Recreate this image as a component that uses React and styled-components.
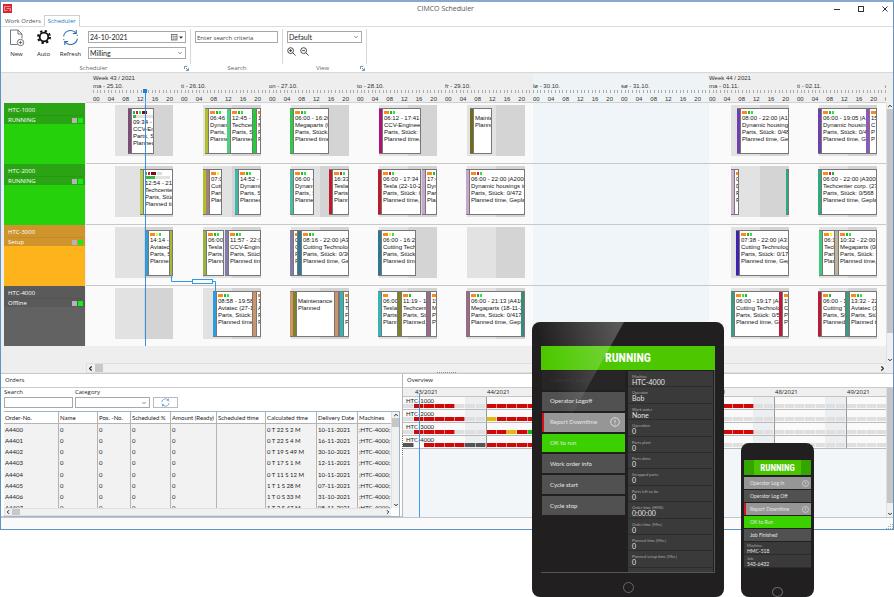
import React from "react";
import styled, { createGlobalStyle, css } from "styled-components";
import { ChevronDown, ChevronUp, ChevronLeft, ChevronRight } from "lucide-react";

const DAY = 88;
const LEAD = 7;
const UI = `"Open Sans", "Noto Sans", sans-serif`;
const SMALL = `Lato, "Open Sans", sans-serif`;
const PLAIN = `"Liberation Sans", sans-serif`;
const HEAVY = `"Roboto Condensed", "Open Sans Condensed", Roboto, sans-serif`;

const C = {
  o: "#f98a1c",
  g: "#22b832",
  l: "#2ce83c",
  r: "#d3203a",
  d: "#7a0a18",
  y: "#f4ee3c",
  w: "#dcdcdc",
};

/* ---------- data ---------- */

const hours = ["00", "04", "08", "12", "16", "20"];
const days = [
  { name: "ma - 25.10.", week: "Week 43 / 2021", hours },
  { name: "ti - 26.10.", hours },
  { name: "on - 27.10.", hours },
  { name: "to - 28.10.", hours },
  { name: "fr - 29.10.", hours },
  { name: "lø - 30.10.", off: true, hours },
  { name: "sø - 31.10.", off: true, hours },
  { name: "ma - 01.11.", week: "Week 44 / 2021", hours },
  { name: "ti - 02.11.", hours },
  { name: "on", hours: ["00"] },
];

const P = "Parts, Stück: ";
const T = "Planned time, Geplant";

// x and w are canvas units, text is one entry per line
const machines = [
  {
    name: "HTC-1000",
    state: "RUNNING",
    head: "#2aa315",
    body: "#25d10b",
    jobs: [
      { x: 42, w: 26, color: "#7c4c7a", chips: "grld", progress: 3, text: ["09:34 - 17:20", "CCV-Engineering", P, T] },
      { x: 119, w: 23, color: "#b1be2e", chips: "ogl", text: ["06:46", "Dynamic", P, T] },
      { x: 141, w: 26, color: "#52cf7e", chips: "ogl", text: ["12:45 - 19:30", "Techcenter", P, T] },
      { x: 167, w: 8, color: "#1fcf3a", chips: "o", text: ["1", "M", "P", "P"] },
      { x: 204, w: 39, color: "#2fc848", chips: "ogl", text: ["06:00 - 16:26", "Megaparts (08", P, T] },
      { x: 293, w: 42, color: "#ad1279", chips: "ogl", text: ["06:12 - 17:41 |A", "CCV-Engineering", P + "0", T] },
      { x: 384, w: 22, color: "#6f6c1f", chips: "", text: ["Maintenance", "Planned"] },
      { x: 651, w: 52, color: "#6d40ad", chips: "ogl", text: ["08:00 - 22:00 |A12", "Dynamic housings", P + "0/48", T] },
      { x: 732, w: 49, color: "#6d40ad", chips: "ogl", text: ["06:00 - 19:05 |A1", "Dynamic housing", P + "0/48", T] },
      { x: 780, w: 11, color: "#8f55c2", chips: "o", text: ["15", "C", "P", "P"] },
    ],
  },
  {
    name: "HTC-2000",
    state: "RUNNING",
    head: "#2aa315",
    body: "#25d10b",
    jobs: [
      { x: 54, w: 33, color: "#bccc48", chips: "grdw", progress: 10, text: ["12:54 - 21:55", "Techcenter", P, T] },
      { x: 117, w: 4, color: "#b1be2e", text: [] },
      { x: 120, w: 16, color: "#a38177", chips: "oy", text: ["07:05", "Cutting", P, T] },
      { x: 149, w: 26, color: "#3fb8a5", chips: "ogl", text: ["14:52 - 22:00", "Dynamic", P, T] },
      { x: 204, w: 24, color: "#4eb9a2", chips: "ogl", text: ["06:00 - 11", "Dynamic", P, T] },
      { x: 243, w: 20, color: "#bf1a2b", chips: "orl", text: ["16:33", "Tesla", P, T] },
      { x: 292, w: 43, color: "#bf1a2b", chips: "orl", text: ["06:00 - 17:34 |A", "Tesla (22-10-2021", P + "0/3", T] },
      { x: 336, w: 15, color: "#c6a6cd", chips: "ogr", text: ["17:41", "Dynamic", P, T] },
      { x: 380, w: 59, color: "#c6a6cd", chips: "orl", text: ["06:00 - 22:00 |A2008", "Dynamic housings inc", P + "0/472", T] },
      { x: 645, w: 8, color: "#cdb4cf", chips: "o", text: ["0", "D", "P", "P"] },
      { x: 700, w: 3, color: "#2fa97e", text: [] },
      { x: 732, w: 59, color: "#2fa97e", chips: "org", text: ["06:00 - 22:00 |A3005", "Techcenter corp. (27-", P + "0/568", T] },
    ],
  },
  {
    name: "HTC-3000",
    state: "Setup",
    head: "#cf952c",
    body: "#fdb31b",
    jobs: [
      { x: 59, w: 25, color: "#2f9fd8", chips: "oyl", text: ["14:14 - 21:10", "Aviatec", P, T] },
      { x: 84, w: 3, color: "#a9b92f", text: [] },
      { x: 117, w: 21, color: "#98b43c", chips: "ogl", text: ["06:00", "Tesla (22", P, T] },
      { x: 139, w: 36, color: "#837cab", chips: "ogl", text: ["11:57 - 22:00", "CCV-Engineering", P, T] },
      { x: 204, w: 8, color: "#837cab", chips: "o", text: ["0", "C", "P", "P"] },
      { x: 212, w: 51, color: "#2b7894", chips: "ogl", text: ["08:16 - 22:00 |A30", "Cutting Technology", P + "0/36", T] },
      { x: 292, w: 38, color: "#2b7894", chips: "oyl", text: ["06:00 - 16:21", "Cutting Technology", P, T] },
      { x: 650, w: 53, color: "#3d22b3", chips: "ogl", text: ["07:38 - 22:00 |A310", "Cutting Technologies", P + "0/176", T] },
      { x: 733, w: 16, color: "#3ec97b", chips: "oy", text: ["06:11", "Techcenter", P, T] },
      { x: 749, w: 42, color: "#bdb49b", chips: "ogl", text: ["10:32 - 22:00 |A", "Megaparts (08-11", P + "0", T] },
    ],
  },
  {
    name: "HTC-4000",
    state: "Offline",
    head: "#5a5a5a",
    body: "#626262",
    jobs: [
      { x: 127, w: 40, color: "#2f9be2", chips: "ogl", text: ["08:58 - 19:58 |A", "Aviatec (27-10", P + "0", T] },
      { x: 167, w: 8, color: "#cd936c", chips: "o", text: ["1", "A", "P", "P"] },
      { x: 204, w: 4, color: "#cd936c", text: [] },
      { x: 207, w: 42, color: "#7e8124", chips: "", text: ["Maintenance", "Planned"] },
      { x: 249, w: 5, color: "#cd936c", text: [] },
      { x: 254, w: 9, color: "#33b6b5", chips: "o", text: ["1", "T", "P", "P"] },
      { x: 292, w: 20, color: "#33b6b5", chips: "o", text: ["06:00", "Tesla", P, T] },
      { x: 312, w: 29, color: "#7e8124", chips: "og", text: ["11:19 - 15:50", "Techcenter", P, T] },
      { x: 341, w: 10, color: "#9a6a8b", chips: "o", text: ["15", "M", "P", "P"] },
      { x: 380, w: 56, color: "#9a6a8b", chips: "ogl", text: ["06:00 - 21:13 |A4106", "Megaparts (18-11-20", P + "0/417", T] },
      { x: 435, w: 4, color: "#3b8a7a", text: [] },
      { x: 645, w: 49, color: "#3c9a82", chips: "olg", text: ["06:00 - 19:17 |A4", "Cutting Technology", P + "0/50", T] },
      { x: 693, w: 10, color: "#bd1a38", chips: "o", text: ["15", "C", "P", "P"] },
      { x: 732, w: 28, color: "#bd1a38", chips: "og", text: ["06:00 - 13:30", "Cutting Tech", P, T] },
      { x: 760, w: 31, color: "#3c9a82", chips: "ogl", text: ["13:32 - 22:00", "Aviatec (12-11", P, T] },
    ],
  },
];

const columns = [
  ["Order-No.", 55],
  ["Name", 39],
  ["Pos. -No.", 33],
  ["Scheduled %", 40],
  ["Amount (Ready)", 46],
  ["Scheduled time", 49],
  ["Calculated time", 51],
  ["Delivery Date", 41],
  ["Machines", 33],
];

const orders = [
  ["A4400", "0 T 22 S 2 M", "10-11-2021"],
  ["A4401", "0 T 22 S 4 M", "16-11-2021"],
  ["A4402", "0 T 19 S 49 M", "30-10-2021"],
  ["A4403", "0 T 17 S 1 M", "12-11-2021"],
  ["A4404", "0 T 11 S 12 M", "10-11-2021"],
  ["A4405", "1 T 1 S 28 M", "07-11-2021"],
  ["A4406", "1 T 0 S 33 M", "31-10-2021"],
  ["A4407", "1 T 2 S 47 M", "08-11-2021"],
];

// one letter per day: r busy, y setup, g running, k offline, n now, - free
const overview = [
  ["HTC-1000", "-", "rrrr---", "rrrrr--", "rrrrr--", "rrrrr--", "rrrrr--", "-------", "-------"],
  ["HTC-2000", "-", "rrrrr--", "yrrrr--", "rrrrr--", "rrrrr--", "-------", "-------", "-------"],
  ["HTC-3000", "-", "rrrr---", "rryrg--", "rrrrr--", "rrrrr--", "rrrrr--", "-------", "-------"],
  ["HTC-4000", "k", "nrrrrkk", "rrrrr--", "rrrrr--", "rrrrr--", "-------", "-------", "-------"],
];
const weeks = ["43/2021", "44/2021", "45/2021", "46/2021", "47/2021", "48/2021", "49/2021"];
const cellColor = {
  r: "#d00808",
  y: "#e2b90c",
  g: "#17b81a",
  k: "#555555",
  n: "#ffffff",
  "-": "#dfdfdf",
};

const tabletInfo = [
  ["Machine", "HTC-4000"],
  ["Operator", "Bob"],
  ["Work order", "None"],
  ["Operation", "0"],
  ["Parts plant", "0"],
  ["Parts done", "0"],
  ["Scrapped parts", "0"],
  ["Parts left to do", "0"],
  ["Order time (HMS)", "0:00:00"],
  ["Order time (Min.)", "0"],
  ["Planned time (Min.)", "0"],
  ["Planned setup time (Min.)", "0"],
  ["Setup time left (Min.)", ""],
];

/* ---------- icons ---------- */

const LogoIcon = () => (
  <svg width="9" height="9" viewBox="0 0 9 9">
    <rect width="9" height="9" fill="#d9252f" />
    <path d="M7.500 2.500H1.500v4h3M3.500 4.500h4v2H6" fill="none" stroke="#f3b0b3" strokeWidth="0.8" />
  </svg>
);

const NewIcon = () => (
  <svg width="16" height="18" viewBox="0 0 16 18" fill="none" stroke="#555" strokeWidth="0.8">
    <path d="M8.500 15.500H1.500V1H9l4 4v4.500" />
    <path d="M9 1v4h4" />
    <circle cx="11.500" cy="13.500" r="3.200" fill="#fff" />
    <path d="M11.500 11.800v3.400M9.800 13.500h3.400" />
  </svg>
);

const GearIcon = () => (
  <svg width="16" height="16" viewBox="0 0 16 16" fill="none" stroke="#111">
    <circle cx="8" cy="8" r="4.300" strokeWidth="1.800" />
    <circle cx="8" cy="8" r="6" strokeWidth="2" strokeDasharray="2.300 2.412" />
  </svg>
);

const RefreshIcon = ({ size }) => (
  <svg width={size} height={size} viewBox="0 0 16 16" fill="none" stroke="#2f6fae" strokeWidth="1">
    <path d="M1.500 7A6.600 6.600 0 0 1 13 3.700M14.500 9A6.600 6.600 0 0 1 3 12.300" />
    <path d="M1.500 9.500a6.600 6.600 0 0 0 1 2.200M14.500 6.500a6.600 6.600 0 0 0-.8-2" strokeDasharray="1 1" />
    <path d="M13.400 1v3.200h-3.200M2.600 15v-3.200h3.200" />
  </svg>
);

const LensIcon = ({ minus }) => (
  <svg width="9" height="9" viewBox="0 0 9 9" fill="none" stroke="#333" strokeWidth="0.9">
    <circle cx="3.600" cy="3.600" r="2.900" />
    <path d="M5.800 5.800l2.700 2.700M2.200 3.600h2.800" />
    {!minus && <path d="M3.600 2.200v2.800" />}
  </svg>
);

const LauncherIcon = () => (
  <svg width="5" height="5" viewBox="0 0 5 5" fill="none" stroke="#4a78b0" strokeWidth="0.8">
    <path d="M.5 3V.5H3M2 2l2.200 2.200M4.500 2.200v2.300H2.200" />
  </svg>
);

const CalendarIcon = () => (
  <svg width="12" height="7" viewBox="0 0 12 7">
    <rect x="0.500" y="0.500" width="5.500" height="5.500" fill="#ddd" stroke="#666" strokeWidth="0.800" />
    <path d="M.5 2.500H6M2.500 2.500V6M4.200 2.500V6" stroke="#888" strokeWidth="0.500" />
    <path d="M8 2.500h4L10 4.700z" fill="#333" />
  </svg>
);

const AlertIcon = ({ size }) => (
  <svg width={size} height={size} viewBox="0 0 10 10" fill="none" stroke="#e4e4e4" strokeWidth="0.900">
    <circle cx="5" cy="5" r="4.300" />
    <path d="M5 2.600v3M5 6.600v.9" />
  </svg>
);

/* ---------- styles ---------- */

const GlobalStyle = createGlobalStyle`
  *, *::before, *::after { box-sizing: border-box; }
  body {
    margin: 0;
    background: #fff;
    color: #222;
    font-family: ${UI};
    font-size: 6px;
    line-height: 8px;
    overflow: hidden;
  }
  button, input, select { font: inherit; color: inherit; margin: 0; }
  button { background: none; border: 0; padding: 0; }
  svg { display: block; flex: none; }
`;

const Page = styled.div`
  position: relative;
  min-height: 597px;
`;

const Window = styled.main`
  display: flex;
  flex-direction: column;
  border: 1px solid #5f93c4;
  border-top: 2px solid #86a9cd;
  background: #fff;
`;

const TitleBar = styled.header`
  display: grid;
  grid-template-columns: 1fr auto 1fr;
  align-items: center;
  height: 13px;
  padding: 0 5px 0 2px;
`;

const Title = styled.h1`
  margin: 0;
  font-size: 7px;
  font-weight: 400;
  color: #555;
`;

const WindowButtons = styled.div`
  display: flex;
  justify-content: flex-end;
  gap: 18px;
`;

const Tabs = styled.nav`
  display: flex;
  align-items: flex-end;
  height: 12px;
  padding-left: 1px;
  border-bottom: 1px solid #dcdcdc;
`;

const Tab = styled.button`
  height: 12px;
  padding: 0 3px;
  margin-bottom: -1px;
  color: ${({ $active }) => ($active ? "#1c78c8" : "#555")};
  ${({ $active }) =>
    $active &&
    css`
      border: 1px solid #cfcfcf;
      border-bottom-color: #fff;
      background: #fff;
    `}
`;

const Ribbon = styled.section`
  display: flex;
  height: 46px;
  padding-top: 2px;
  border-bottom: 1px solid #d8d8d8;
`;

const Group = styled.div`
  display: flex;
  flex-direction: column;
  justify-content: space-between;
  width: ${({ $w }) => $w}px;
  padding-left: 2px;
  background: linear-gradient(#d8d8d8, #d8d8d8) right top / 1px 35px no-repeat;
`;

const GroupBody = styled.div`
  display: flex;
  height: 32px;
`;

const GroupName = styled.div`
  display: grid;
  grid-template-columns: 1fr auto;
  align-items: center;
  text-align: center;
  color: #666;
  padding-right: 2px;
`;

const Tools = styled.div`
  display: flex;
  padding-right: 2px;
`;

const Tool = styled.button`
  display: flex;
  flex-direction: column;
  align-items: center;
  justify-content: space-between;
  width: 27px;
  height: 29px;
`;

const Fields = styled.div`
  display: flex;
  flex-direction: column;
  gap: 4px;
  padding: 2px 0 0 2px;
`;

const Box = styled.div`
  display: grid;
  grid-template-columns: 1fr auto;
  align-items: center;
  width: ${({ $w }) => $w}px;
  height: ${({ $h = 12 }) => $h}px;
  border: 1px solid #a8a8a8;
  background: #fff;
  padding-right: 2px;
  font-family: ${SMALL};
  font-size: 7px;

  input,
  select {
    grid-area: 1 / 1 / 2 / 3;
    width: 100%;
    height: 100%;
    padding: 0 0 0 1px;
    border: 0;
    background: none;
    appearance: none;
    outline: none;
  }
  input::placeholder {
    color: #444;
    font-family: ${UI};
    font-size: 6px;
  }
  svg {
    grid-area: 1 / 2 / 2 / 3;
    pointer-events: none;
  }
`;

const Lenses = styled.div`
  display: flex;
  gap: 4px;
`;

const Planner = styled.section`
  display: grid;
  grid-template-columns: 85px 1fr 7px;
  background: #eee;
`;

const Ruler = styled.div`
  position: relative;
  display: flex;
  height: 30px;
  padding: 1px 0 0 ${LEAD}px;
  overflow: hidden;
  border-bottom: 1px solid #cfcfcf;
  font-family: ${PLAIN};
  color: #333;
`;

const RulerDay = styled.div`
  flex: 0 0 ${DAY}px;
  display: grid;
  grid-template-rows: 8px 8px 5px 7px;
  white-space: nowrap;
  background: ${({ $off }) => ($off ? "#eef3f6" : "none")};
`;

const Ticks = styled.div`
  height: 3px;
  background: repeating-linear-gradient(90deg, #aaa 0 1px, transparent 1px calc(100% / 24));
`;

const Hours = styled.div`
  display: grid;
  grid-template-columns: repeat(6, 1fr);
`;

const Marker = styled.div`
  position: absolute;
  top: 16px;
  bottom: 0;
  left: 57px;
  width: 4px;
  background: linear-gradient(#1f7fd8, #1f7fd8) center top / 4px 4px no-repeat,
    linear-gradient(#3a90e0, #3a90e0) 2px 0 / 1px 100% no-repeat;
`;

const Machine = styled.div`
  height: ${({ $last }) => ($last ? 60 : 61)}px;
  margin: 0 1px 0 3px;
  background: ${({ $color }) => $color};
  color: #fff;
`;

const MachineHead = styled.div`
  height: 21px;
  padding: 3px 2px 0 4px;
  background: ${({ $color }) => $color};
`;

const MachineState = styled.div`
  display: flex;
  align-items: center;
  gap: 1px;
  margin-top: 1px;
  border-top: 1px solid #0001;

  span {
    flex: 1;
  }
`;

const Lamp = styled.i`
  width: 5px;
  height: 5px;
  background: ${({ $on }) => ($on ? "#12f012" : "#b4b4b4")};
`;

const Canvas = styled.div`
  position: relative;
  overflow: hidden;
`;

const Track = styled.div`
  position: relative;
  display: flex;
  height: ${({ $last }) => ($last ? 60 : 61)}px;
  padding-left: ${LEAD}px;
  background: #fafafa;
  border-bottom: ${({ $last }) => ($last ? 0 : 1)}px solid #c8c8c8;
`;

const TrackDay = styled.div`
  flex: 0 0 ${DAY}px;
  display: flex;
  padding: 2px 8px 0 22px;
  background: ${({ $off }) => ($off ? "#f0f5f9" : "none")};
`;

const Shift = styled.div`
  flex: 1;
  height: 51px;
  background: ${({ $late }) => ($late ? "#d4d4d4" : "#e2e2e2")};
`;

const Job = styled.article`
  position: absolute;
  top: 5px;
  height: 46px;
  overflow: hidden;
  padding: ${({ $strip }) => ($strip ? "0" : "2px 0 0 5px")};
  border: 1px solid #777;
  border-left: 0;
  background: linear-gradient(90deg, ${({ $color }) => $color} 3px, #777 3px 4px, #fff 4px);
  font-family: ${PLAIN};
  line-height: 7px;
  color: #111;
  white-space: nowrap;
`;

const Chips = styled.div`
  display: flex;
  gap: 1px;
  height: 3px;
  margin-bottom: 1px;
`;

const Chip = styled.i`
  flex: 0 0 ${({ $kind }) => ("odw".includes($kind) ? 5 : 2)}px;
  background: ${({ $kind }) => C[$kind]};
`;

const Progress = styled.div`
  width: 25px;
  height: 3px;
  margin: 1px 0;
  background: linear-gradient(90deg, #35b845 ${({ $done }) => $done}px, #e2e2e2 0);
`;

const Overlay = styled.svg`
  position: absolute;
  inset: 0;
  width: 100%;
  height: 100%;
`;

const VBar = styled.div`
  display: flex;
  flex-direction: column;
  justify-content: space-between;
  align-items: center;
  background: #f0f0f0;
  border-left: 1px solid #e0e0e0;
`;

const Thumb = styled.div`
  flex: 0 1 ${({ $size }) => $size}px;
  align-self: stretch;
  margin-bottom: auto;
  background: #c6c6c6;
`;

const HBar = styled.div`
  display: flex;
  align-items: center;
  height: ${({ $h }) => $h}px;
  background: #f0f0f0;
  border: 1px solid #e0e0e0;
  border-right: 0;

  i {
    width: 8px;
    height: 100%;
    margin: 0 auto 0 1px;
    background: #c8c8c8;
  }
`;

const Gap = styled.div`
  height: 17px;
`;

const Lower = styled.section`
  position: relative;
  display: grid;
  grid-template-columns: 402px 1fr;
  height: 145px;
  border-top: 1px solid #c8c8c8;
  border-bottom: 2px solid #c4c4cc;
`;

const Grip = styled.div`
  position: absolute;
  ${({ $vertical }) =>
    $vertical
      ? css`
          top: 62px;
          left: 401px;
          width: 1px;
          height: 20px;
          background: repeating-linear-gradient(#666 0 1px, #fff 1px 2px);
        `
      : css`
          top: -2px;
          left: calc(50% - 10px);
          width: 20px;
          height: 1px;
          background: repeating-linear-gradient(90deg, #888 0 1px, #eee 1px 2px);
        `}
`;

const Panel = styled.div`
  display: flex;
  flex-direction: column;
  min-width: 0;
  border-right: ${({ $line }) => ($line ? 1 : 0)}px solid #b8b8b8;
`;

const PanelTitle = styled.h2`
  margin: 0;
  padding: 1px 4px;
  height: 14px;
  font-size: 6px;
  font-weight: 400;
  line-height: 10px;
  border-bottom: 1px solid #ccc;
`;

const Filters = styled.form`
  display: flex;
  align-items: flex-end;
  gap: 2px;
  height: 20px;
  padding-left: 3px;
`;

const Field = styled.label`
  display: grid;
  line-height: 9px;
`;

const RefreshButton = styled.button`
  display: grid;
  place-items: center;
  width: 25px;
  height: 11px;
  margin-left: 1px;
  border: 1px solid #bbb;
`;

const Grid = styled.div`
  display: grid;
  grid-template-columns: 387px 8px;
  margin: 3px 0 0 3px;
  width: 396px;
  border: 1px solid #9fb4c8;
  border-left: 0;
`;

const Clip = styled.div`
  height: 96px;
  overflow: hidden;
  background: #f2f2f2;
`;

const Table = styled.table`
  width: 100%;
  height: 102px;
  table-layout: fixed;
  border-collapse: separate;
  border-spacing: 0;
  white-space: nowrap;
  font-family: ${SMALL};

  th,
  td {
    padding: 0 0 0 1px;
    font-weight: 400;
    text-align: left;
    border-right: 1px solid #b4b4b4;
  }
  th {
    height: 12px;
    background: #fff;
    border-bottom: 1px solid #b4b4b4;
  }
  th:last-child,
  td:last-child {
    border-right: 0;
  }
`;

const Overview = styled.div`
  display: grid;
  grid-template-columns: 1fr 7px;
  flex: 1;
  min-height: 0;
`;

const Timeline = styled.div`
  position: relative;
  overflow: hidden;
  background: #f2f6f9;
`;

const WeekHead = styled.div`
  display: flex;
  height: 9px;
  padding-left: 11px;
  background: #efefef;
  border-bottom: 1px solid #c4c4c4;

  span {
    flex: 0 0 72px;
    padding-left: 1px;
  }
`;

const Lane = styled.div`
  display: flex;
  align-items: flex-end;
  height: 13px;
  padding-bottom: 1px;
  background: #fafafa;
  border-bottom: 1px solid #bbb;
`;

const LaneName = styled.div`
  position: absolute;
  left: 3px;
  margin-bottom: 4px;
  font-family: ${SMALL};
  line-height: 7px;
`;

const LaneWeek = styled.div`
  flex: 0 0 ${({ $lead }) => ($lead ? 11 : 72)}px;
  display: grid;
  grid-auto-flow: column;
  grid-auto-columns: 1fr;
  align-items: end;
  height: 12px;
  margin-bottom: -1px;
  padding-bottom: 1px;
  border-left: ${({ $line }) => ($line ? 1 : 0)}px solid #999;
  background: linear-gradient(90deg, transparent 71%, ${({ $lead }) => ($lead ? "transparent" : "#eceff1")} 71%);
`;

const Cell = styled.i`
  height: 4px;
  border-right: 1px solid #fff8;
  background: ${({ $kind }) => cellColor[$kind]};
`;

const Now = styled.div`
  position: absolute;
  top: 6px;
  bottom: 0;
  left: 16px;
  width: 1px;
  background: #3f9cec;
`;

const StatusBar = styled.footer`
  height: 11px;
  display: flex;
  justify-content: flex-end;
  align-items: flex-end;
  background: #fafafa;
`;

const Tablet = styled.aside`
  position: absolute;
  top: 322px;
  right: 170px;
  display: flex;
  flex-direction: column;
  align-items: center;
  width: 192px;
  height: 275px;
  padding-top: 24px;
  border-radius: 8px;
  background: #211f20;
  color: #ddd;
  font-family: ${SMALL};
`;

const Phone = styled(Tablet)`
  top: 443px;
  right: 80px;
  width: 73px;
  height: 154px;
  padding-top: 17px;
`;

const Glare = styled.svg`
  position: absolute;
  top: 0;
  left: 0;
  pointer-events: none;
`;

const Banner = styled.div`
  align-self: stretch;
  margin: 0 ${({ $small }) => ($small ? 3 : 9)}px;
  height: ${({ $small }) => ($small ? 17 : 24)}px;
  display: grid;
  place-items: center;
  background: ${({ $small }) =>
    $small ? "linear-gradient(90deg, #35a300 15%, #4bc400 15% 85%, #35a300 85%)" : "#4dc800"};
  color: #fff;
  font-family: ${HEAVY};
  font-weight: 700;
  font-size: ${({ $small }) => ($small ? 9 : 12)}px;
`;

const Screen = styled.div`
  display: grid;
  grid-template-columns: 83px 1fr;
  gap: 3px;
  align-self: stretch;
  height: 203px;
  margin: 0 9px;
  padding: 1px 1px 0 1px;
  border-right: 1px solid #555;
  border-bottom: 1px solid #555;
`;

const Menu = styled.div`
  display: flex;
  flex-direction: column;
  gap: 2px;
  height: 144px;
`;

const Action = styled.button`
  flex: 1;
  display: flex;
  align-items: center;
  justify-content: space-between;
  padding: 0 5px 0 ${({ $alert }) => ($alert ? 6 : 8)}px;
  border-left: ${({ $alert }) => ($alert ? 2 : 0)}px solid #d3121a;
  background: ${({ $tone }) =>
    ({ plain: "#515151", light: "#969696", go: "#3bd000", ghost: "#272526" })[$tone]};
  color: ${({ $tone }) => ($tone === "ghost" ? "#333" : "#e4e4e4")};
`;

const PhoneScreen = styled.div`
  display: flex;
  flex-direction: column;
  gap: 1px;
  width: 67px;
  height: 107px;
  padding-top: 2px;
`;

const PhoneAction = styled(Action)`
  flex: 0 0 12px;
  padding: 0 2px 0 ${({ $alert }) => ($alert ? 4 : 6)}px;
  font-size: 5px;
`;

const InfoClip = styled.div`
  height: 201px;
  overflow: hidden;
`;

const InfoList = styled.dl`
  display: flex;
  flex-direction: column;
  height: 213px;
  margin: 0;
`;

const Info = styled.div`
  flex: 1;
  padding: 3px 4px 0;
  background: #3a3a3a;
  border-bottom: 1px solid #2c2c2c;

  dt {
    font-size: 4px;
    line-height: 5px;
    color: #aaa;
  }
  dd {
    margin: 0;
    font-size: 7px;
    line-height: 7px;
    color: #e4e4e4;
  }
`;

const PhoneList = styled.dl`
  margin: 0;
`;

const PhoneInfo = styled(Info)`
  height: 13px;
  padding: 2px 3px 0;
  dt {
    line-height: 4px;
  }
  dd {
    font-size: 5px;
    line-height: 6px;
  }
`;

const Home = styled.button`
  width: 11px;
  height: 11px;
  margin: ${({ $small }) => ($small ? 16 : 9)}px 0 0;
  border: 1px solid #6a6a6a;
  border-radius: 50%;
`;

/* ---------- parts ---------- */

// drop the characters that can not fit in the card
const fit = (line, w) => line.slice(0, Math.ceil((w - 6) / 2.5)).trim();

const JobCard = ({ job }) => (
  <Job $color={job.color} $strip={!job.text.length} style={{ left: job.x, width: job.w }}>
    {job.text.length > 0 && (
      <Chips>
        {[...job.chips].map((kind, i) => (
          <Chip key={i} $kind={kind} />
        ))}
      </Chips>
    )}
    {job.progress && <Progress $done={job.progress} />}
    {job.text.map((line, i) => (
      <div key={i}>{fit(line, job.w)}</div>
    ))}
  </Job>
);

const PlannerView = () => (
  <Planner>
    <div />
    <Ruler>
      {days.map((day) => (
        <RulerDay key={day.name} $off={day.off}>
          <span>{day.week}</span>
          <span>{day.name}</span>
          <Ticks />
          <Hours>
            {day.hours.map((h) => (
              <span key={h}>{h}</span>
            ))}
          </Hours>
        </RulerDay>
      ))}
      <Marker />
    </Ruler>
    <div />
    <div>
      {machines.map((m, i) => (
        <Machine key={m.name} $color={m.body} $last={i === 3}>
          <MachineHead $color={m.head}>
            {m.name}
            <MachineState>
              <span>{m.state}</span>
              <Lamp />
              <Lamp $on />
            </MachineState>
          </MachineHead>
        </Machine>
      ))}
      <Gap />
    </div>
    <Canvas>
      {machines.map((m, i) => (
        <Track key={m.name} $last={i === 3}>
          {days.map((day) => (
            <TrackDay key={day.name} $off={day.off}>
              {!day.off && <Shift />}
              {!day.off && <Shift $late />}
            </TrackDay>
          ))}
          {m.jobs.map((job) => (
            <JobCard key={job.x} job={job} />
          ))}
        </Track>
      ))}
      <Overlay fill="none" stroke="#2f9be8">
        <path d="M59.500 0V243" stroke="#3a90e0" />
        <path d="M85.500 172v6.500H106M127 178.500h2.500V189" />
        <rect x="106.500" y="176.500" width="20" height="4" fill="#fff" />
      </Overlay>
    </Canvas>
    <VBar>
      <ChevronUp size={6} strokeWidth={4} />
      <Thumb $size={224} />
      <ChevronDown size={6} strokeWidth={4} />
    </VBar>
    <div />
    <HBar $h={10}>
      <ChevronLeft size={7} strokeWidth={4} />
      <i />
      <ChevronRight size={7} strokeWidth={4} />
    </HBar>
    <div />
  </Planner>
);

const OrdersPanel = () => (
  <Panel $line>
    <PanelTitle>Orders</PanelTitle>
    <Filters>
      <Field>
        Search
        <Box $w={69} $h={11}>
          <input type="text" />
        </Box>
      </Field>
      <Field>
        Category
        <Box $w={75} $h={11}>
          <select />
          <ChevronDown size={6} />
        </Box>
      </Field>
      <RefreshButton type="button" aria-label="Refresh orders">
        <RefreshIcon size={9} />
      </RefreshButton>
    </Filters>
    <Grid>
      <Clip>
        <Table>
          <colgroup>
            {columns.map(([name, w]) => (
              <col key={name} width={w} />
            ))}
          </colgroup>
          <thead>
            <tr>
              {columns.map(([name]) => (
                <th key={name}>{name}</th>
              ))}
            </tr>
          </thead>
          <tbody>
            {orders.map(([no, time, date]) => (
              <tr key={no}>
                <td>{no}</td>
                <td>0</td>
                <td>0</td>
                <td>0</td>
                <td>0</td>
                <td />
                <td>{time}</td>
                <td>{date}</td>
                <td>;HTC-4000;</td>
              </tr>
            ))}
          </tbody>
        </Table>
      </Clip>
      <VBar>
        <ChevronUp size={6} strokeWidth={4} />
        <Thumb $size={9} />
        <ChevronDown size={6} strokeWidth={4} />
      </VBar>
      <HBar $h={8}>
        <ChevronLeft size={6} strokeWidth={4} />
        <i />
        <ChevronRight size={6} strokeWidth={4} />
      </HBar>
    </Grid>
  </Panel>
);

const OverviewPanel = () => (
  <Panel>
    <PanelTitle>Overview</PanelTitle>
    <Overview>
      <Timeline>
        <WeekHead>
          {weeks.map((w) => (
            <span key={w}>{w}</span>
          ))}
        </WeekHead>
        {overview.map(([name, ...parts]) => (
          <Lane key={name}>
            {parts.map((part, i) => (
              <LaneWeek key={i} $lead={i === 0} $line={i > 1}>
                {[...part].map((kind, j) => (
                  <Cell key={j} $kind={kind} />
                ))}
              </LaneWeek>
            ))}
            <LaneName>{name}</LaneName>
          </Lane>
        ))}
        <Now />
      </Timeline>
      <VBar>
        <Thumb $size={115} />
        <ChevronDown size={6} strokeWidth={4} />
      </VBar>
    </Overview>
  </Panel>
);

const TabletView = () => (
  <Tablet>
    <Banner>RUNNING</Banner>
    <Screen>
      <Menu>
        <Action $tone="ghost">Operator Login</Action>
        <Action $tone="plain">Operator Logoff</Action>
        <Action $tone="light" $alert>Report Downtime<AlertIcon size={10} /></Action>
        <Action $tone="go">OK to run</Action>
        <Action $tone="plain">Work order info</Action>
        <Action $tone="plain">Cycle start</Action>
        <Action $tone="plain">Cycle stop</Action>
      </Menu>
      <InfoClip>
        <InfoList>
          {tabletInfo.map(([label, value]) => (
            <Info key={label}>
              <dt>{label}</dt>
              <dd>{value}</dd>
            </Info>
          ))}
        </InfoList>
      </InfoClip>
    </Screen>
    <Home aria-label="Home" />
    <Glare width="92" height="93" viewBox="0 0 92 93">
      <defs>
        <linearGradient id="glare" x1="0" y1="0.600" x2="1" y2="0.300">
          <stop offset="0.200" stopColor="#fff" stopOpacity="0" />
          <stop offset="1" stopColor="#fff" stopOpacity="0.250" />
        </linearGradient>
      </defs>
      <path d="M8 0H92L40 93H0V8A8 8 0 0 1 8 0z" fill="url(#glare)" />
    </Glare>
  </Tablet>
);

const PhoneView = () => (
  <Phone>
    <Banner $small>RUNNING</Banner>
    <PhoneScreen>
      <PhoneAction $tone="light">Operator Log in<AlertIcon size={7} /></PhoneAction>
      <PhoneAction $tone="plain">Operator Log Off</PhoneAction>
      <PhoneAction $tone="light" $alert>Report Downtime<AlertIcon size={7} /></PhoneAction>
      <PhoneAction $tone="go">OK to Run</PhoneAction>
      <PhoneAction $tone="plain">Job Finished</PhoneAction>
      <PhoneList>
        <PhoneInfo><dt>Machine</dt><dd>HMC-518</dd></PhoneInfo>
        <PhoneInfo><dt>Job</dt><dd>543-6432</dd></PhoneInfo>
      </PhoneList>
    </PhoneScreen>
    <Home $small aria-label="Home" />
  </Phone>
);

const App = () => (
  <Page>
    <GlobalStyle />
    <Window>
      <TitleBar>
        <LogoIcon />
        <Title>CIMCO Scheduler</Title>
        <WindowButtons>
          <button aria-label="Minimize">
            <svg width="6" height="6" viewBox="0 0 6 6" stroke="#333"><path d="M0 3.500h6" /></svg>
          </button>
          <button aria-label="Maximize">
            <svg width="6" height="6" viewBox="0 0 6 6" stroke="#333" fill="none"><rect x=".5" y=".5" width="5" height="5" /></svg>
          </button>
          <button aria-label="Close">
            <svg width="6" height="6" viewBox="0 0 6 6" stroke="#333"><path d="M.5.5l5 5M5.500.5l-5 5" /></svg>
          </button>
        </WindowButtons>
      </TitleBar>
      <Tabs>
        <Tab>Work Orders</Tab>
        <Tab $active>Scheduler</Tab>
      </Tabs>
      <Ribbon>
        <Group $w={190}>
          <GroupBody>
            <Tools>
              <Tool><NewIcon />New</Tool>
              <Tool><GearIcon />Auto</Tool>
              <Tool><RefreshIcon size={17} />Refresh</Tool>
            </Tools>
            <Fields>
              <Box $w={98}>
                <input type="text" aria-label="Date" defaultValue="24-10-2021" />
                <CalendarIcon />
              </Box>
              <Box $w={98}>
                <select aria-label="Work area"><option>Milling</option></select>
                <ChevronDown size={6} />
              </Box>
            </Fields>
          </GroupBody>
          <GroupName>Scheduler<LauncherIcon /></GroupName>
        </Group>
        <Group $w={92}>
          <GroupBody>
            <Fields>
              <Box $w={83}>
                <input type="text" aria-label="Search" placeholder="Enter search criteria" />
              </Box>
            </Fields>
          </GroupBody>
          <GroupName>Search</GroupName>
        </Group>
        <Group $w={84}>
          <GroupBody>
            <Fields>
              <Box $w={75}>
                <select aria-label="View"><option>Default</option></select>
                <ChevronDown size={6} />
              </Box>
              <Lenses>
                <button aria-label="Zoom in"><LensIcon /></button>
                <button aria-label="Zoom out"><LensIcon minus /></button>
              </Lenses>
            </Fields>
          </GroupBody>
          <GroupName>View<LauncherIcon /></GroupName>
        </Group>
      </Ribbon>
      <PlannerView />
      <Lower>
        <OrdersPanel />
        <OverviewPanel />
        <Grip />
        <Grip $vertical />
      </Lower>
      <StatusBar>
        <svg width="7" height="7" viewBox="0 0 7 7" stroke="#aaa" strokeDasharray="1 1"><path d="M0 6.500h7M2 4.500h5M4 2.500h3" /></svg>
      </StatusBar>
    </Window>
    <TabletView />
    <PhoneView />
  </Page>
);

export default App;
